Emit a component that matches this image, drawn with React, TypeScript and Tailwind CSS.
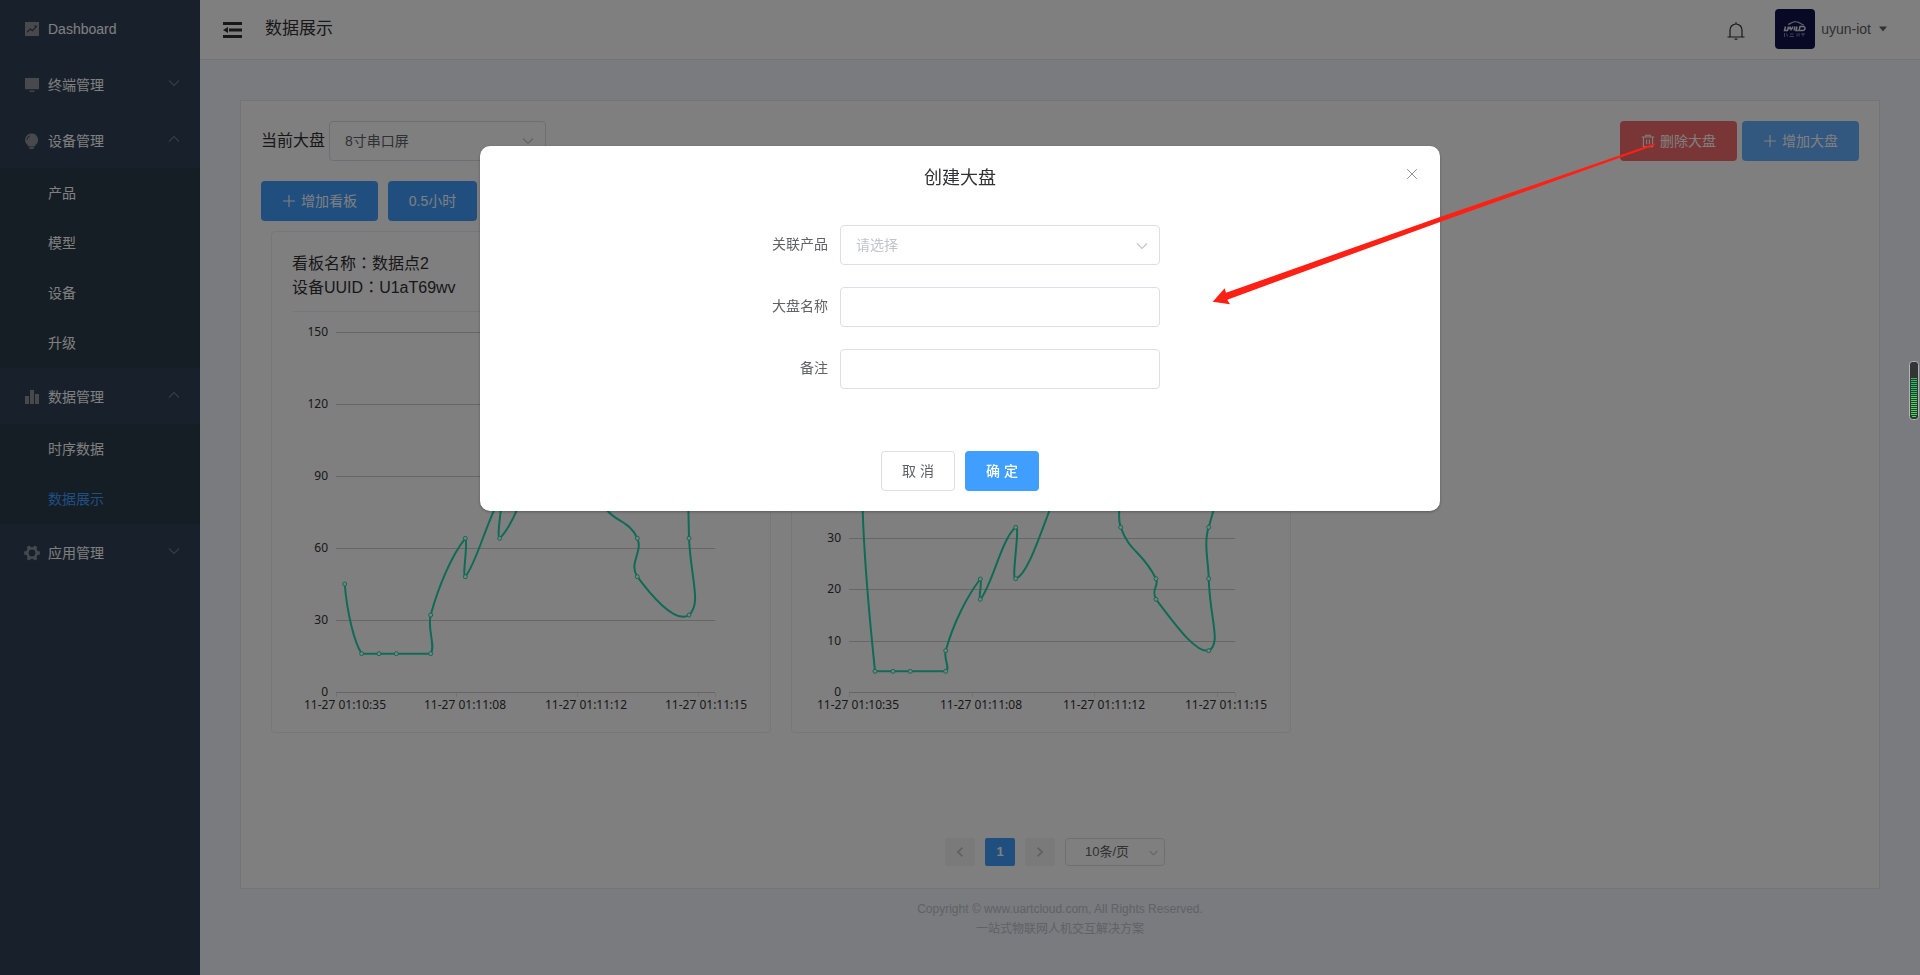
import type { ReactNode } from 'react';

const chevronDown = 'M1 1.5 L6 6.5 L11 1.5';
const chevronUp = 'M1 6.5 L6 1.5 L11 6.5';

function Chevron({ up = false, className = '' }: { up?: boolean; className?: string }) {
  return (
    <svg viewBox="0 0 12 8" className={`h-2 w-3 ${className}`} fill="none" stroke="currentColor" strokeWidth="1.1" aria-hidden="true">
      <path d={up ? chevronUp : chevronDown} />
    </svg>
  );
}

function PlusIcon() {
  return (
    <svg viewBox="0 0 14 14" className="h-3.5 w-3.5" stroke="currentColor" strokeWidth="1.1" aria-hidden="true">
      <path d="M7 1v12M1 7h12" />
    </svg>
  );
}

function TrashIcon() {
  return (
    <svg viewBox="0 0 14 14" className="h-3.5 w-3.5" fill="none" stroke="currentColor" strokeWidth="1.1" aria-hidden="true">
      <path d="M0.8 3h12.4M4.7 3V1.2h4.6V3M2.4 3v9.8h9.2V3M5.6 5.5v4.8M8.4 5.5v4.8" />
    </svg>
  );
}

const icons: Record<string, ReactNode> = {
  marketing: (
    <>
      <path fill="currentColor" d="M1 1h14v14H1z" />
      <path d="M3.2 11.2 6.2 8l2.2 1.6 4.2-4.2M10.4 5.2h2.4" fill="none" stroke="#304156" strokeWidth="1.2" />
    </>
  ),
  platform: <path fill="currentColor" d="M1 1h14v11.2H1zM6 13.4h4l1.2 1.4H4.8z" />,
  bulb: (
    <>
      <path fill="currentColor" d="M7.6 0.4a6.4 6.4 0 0 1 3.9 11.5l-.7 1.5H4.4l-.7-1.5A6.4 6.4 0 0 1 7.6.4zM4.9 14.2h5.4l-1 1.8H5.9z" />
      <path d="M3 6.6a4.6 4.6 0 0 1 3-3.8" fill="none" stroke="#304156" strokeWidth="1" />
    </>
  ),
  bars: <path fill="currentColor" d="M1 7h4v8H1zM6 1h4v14H6zM11 5h4v10h-4z" />,
  gear: (
    <g stroke="currentColor" fill="none">
      <circle cx="8" cy="8" r="4.7" strokeWidth="2.600" />
      <path d="M0.200 8h3M12.800 8h3M4.100 1.250l1.500 2.600M10.400 12.150l1.500 2.600M11.900 1.250l-1.500 2.600M5.600 12.150l-1.500 2.600" strokeWidth="3.400" />
    </g>
  ),
};

type Section = { label: string; icon: string; open?: boolean; children?: string[]; leaf?: boolean };

const sections: Section[] = [
  { label: 'Dashboard', icon: 'marketing', leaf: true },
  { label: '终端管理', icon: 'platform' },
  { label: '设备管理', icon: 'bulb', open: true, children: ['产品', '模型', '设备', '升级'] },
  { label: '数据管理', icon: 'bars', open: true, children: ['时序数据', '数据展示'] },
  { label: '应用管理', icon: 'gear' },
];

function Sidebar() {
  return (
    <nav className="w-[200px] shrink-0 bg-[#304156] text-sm text-white">
      <ul>
        {sections.map((s) => (
          <li key={s.label}>
            <a href="#" className="flex h-14 items-center pt-0.5 pr-5 pl-6">
              <svg viewBox="0 0 16 16" className="mr-2 h-4 w-4 text-[#909399]" aria-hidden="true">
                {icons[s.icon]}
              </svg>
              <span className="grow">{s.label}</span>
              {!s.leaf && <Chevron up={s.open} className="mb-1 text-[#6f7a87]" />}
            </a>
            {s.children && (
              <ul className="bg-[#2b3a4a]">
                {s.children.map((c) => (
                  <li key={c}>
                    <a href="#" className={`flex h-[50px] items-center pl-12 ${c === '数据展示' ? 'text-[#409eff]' : ''}`}>
                      {c}
                    </a>
                  </li>
                ))}
              </ul>
            )}
          </li>
        ))}
      </ul>
    </nav>
  );
}

function Header() {
  return (
    <header className="flex h-[60px] items-center border-b border-[#e6e6e6] bg-white pr-[33px] pb-0.5 pl-[22px]">
      <button type="button" aria-label="折叠菜单" className="pt-0.5 text-[#303133]">
        <svg viewBox="0 0 20 16" className="h-4 w-5" fill="currentColor" aria-hidden="true">
          <path d="M1 0h19v3H1zM7 6.500h13v3H7zM1 13h19v3H1zM1 8l5-3v6z" />
        </svg>
      </button>
      <h1 className="ml-[23px] grow text-[17px] text-[#303133]">数据展示</h1>
      <button type="button" aria-label="通知" className="mr-[30px] pt-1 text-[#303133]">
        <svg viewBox="0 0 18 18" className="h-[18px] w-[18px]" fill="none" stroke="currentColor" strokeWidth="1.200" aria-hidden="true">
          <path d="M0.500 15h17M3 15V8a6 6 0 0 1 12 0v7M9 2V.3M7.600 17.200h2.800" />
        </svg>
      </button>
      <button type="button" className="flex items-center text-sm text-[#606266]">
        <svg viewBox="0 0 40 40" className="mr-1.5 h-10 w-10 rounded" aria-hidden="true">
          <rect width="40" height="40" fill="#10144a" />
          <path d="M13 15.500c3-1 5-3.300 8-2.800 3 .3 5 2.600 8 3.600" fill="none" stroke="#b9bcd6" strokeWidth="1.200" />
          <path d="M10.500 17.500l-1 4h3l1-4M15.500 17.500l-.9 2h2.400l1-2M16.500 19.500l-.8 2M20 17.500l-1 4M22 17.500l-1 4h2M25 17.500l-1 4h3.500c3 0 3.500-4 .5-4z" fill="none" stroke="#e3e4ef" strokeWidth="1.500" />
          <path d="M9.500 24v4M11.500 24.500l1 3M15 25h3.500M14.500 27.500h4.500M22 24.500v3M24 24v3.500M26 25h4M28 24v3.500" fill="none" stroke="#7d81ab" strokeWidth="1" />
        </svg>
        uyun-iot
        <svg viewBox="0 0 8 6" className="ml-2 h-1.5 w-2" aria-hidden="true">
          <path d="M0 0.500h8L4 5.500z" fill="currentColor" />
        </svg>
      </button>
    </header>
  );
}

type ChartSpec = {
  name: string;
  uuid: string;
  left: number;
  yTicks: number[];
  xTicks: number[];
  xLabels: [number, string][];
  path: string;
  points: [number, number][];
};

const charts: ChartSpec[] = [
  {
    name: '数据点2',
    uuid: 'U1aT69wv',
    left: 44,
    yTicks: [0, 30, 60, 90, 120, 150],
    xTicks: [44.5, 164.5, 285.5, 406.5, 423.5],
    xLabels: [[53, '11-27 01:10:35'], [173, '11-27 01:11:08'], [294, '11-27 01:11:12'], [414, '11-27 01:11:15']],
    path: 'M52.7 272C55 300 62 330 69.7 341.7H138.7C144 334 135 318 138.7 303C146.3 274.7 159.7 243 173.3 226.3C176.3 231.3 170 264 173.3 264.7C183 253 191.300 221.300 203 196.300C210 184 209 190 208.700 199C207.300 211.300 205.300 225.300 207.700 226.300C214.700 219.700 220.700 208 226.300 194.700C250 120 290 130 313 194.700L315.700 199C324.700 209.700 338 209.700 345.300 226.300C351.300 239.700 336.300 251.300 345.300 264.700C356.300 279.700 383 313 397 303C409.700 291.300 399 268 397 226.300L396 180',
    points: [[52.7, 272], [69.7, 341.7], [87, 341.7], [104.3, 341.7], [138.7, 341.7], [138.7, 303], [173.3, 226.3], [173.3, 264.7], [207.7, 226.3], [345.3, 226.3], [345.3, 264.7], [397, 303], [397, 226.3]],
  },
  {
    name: '数据点1',
    uuid: 'U1aT69wv',
    left: 37,
    yTicks: [0, 10, 20, 30, 40, 50, 60, 70],
    xTicks: [37.5, 160.5, 282.5, 405.5, 423.5],
    xLabels: [[46, '11-27 01:10:35'], [169, '11-27 01:11:08'], [292, '11-27 01:11:12'], [414, '11-27 01:11:15']],
    path: 'M48 140L50.7 199C53 268 59.7 324.7 63 359.3H133.7C138.7 357.3 131.3 346.3 133.7 338.7C141.3 311.3 154.7 284.7 168.3 267C170.7 269.7 166 285.3 168.3 287.3C179.7 274.7 189.7 226.3 203.7 215.3C208.7 213 198.7 268 203.7 266.7C214.7 263 226.3 228 237.3 199C255 150 300 150 307.3 199C306.7 206.3 307.3 211.3 308.7 215.3C318 241.3 329.7 238 344 266.7C347.3 274.7 338.7 276.3 344 287.3C361.3 309.7 383 341.3 396.7 338.7C409.7 331.3 398 308 396.7 266.7C396.7 251.3 391.3 231.3 396.7 215.3L401.3 199',
    points: [[63, 359.3], [81, 359.3], [98.3, 359.3], [133.7, 359.3], [133.7, 338.7], [168.3, 267], [168.3, 287.3], [203.7, 215.3], [203.7, 266.7], [308.7, 215.3], [344, 266.7], [344, 287.3], [396.7, 338.7], [396.7, 266.7], [396.7, 215.3]],
  },
];

// The Traditional Chinese face centres the full-width colon in its cell.
function Colon() {
  return <span className="font-['Noto_Sans_CJK_TC',sans-serif] leading-none">：</span>;
}

function ChartCard({ chart }: { chart: ChartSpec }) {
  const step = 360 / (chart.yTicks.length - 1);
  return (
    <article className="w-[500px] rounded border border-[#ebeef5] px-5 pt-5 pb-5">
      <header className="border-b border-[#ebeef5] pb-[11px] text-base text-[#303133]">
        <p>看板名称<Colon />{chart.name}</p>
        <p>设备UUID<Colon />{chart.uuid}</p>
      </header>
      <svg viewBox="0 0 460 400" className="block h-[400px] w-[460px] font-['Noto_Sans',sans-serif] text-xs" role="img" aria-label={chart.name}>
        {chart.yTicks.map((t, i) => {
          const y = Math.round(380 - i * step) + 0.5;
          return (
            <g key={t}>
              <path d={`M${chart.left} ${y}H423`} stroke="#cccccc" />
              <text x={chart.left - 8} y={y + 3} textAnchor="end" fill="#333333">{t}</text>
            </g>
          );
        })}
        {chart.xTicks.map((x) => (
          <path key={x} d={`M${x} 381v4`} stroke="#e0e6f1" />
        ))}
        {chart.xLabels.map(([x, t]) => (
          <text key={t} x={x} y="397" textAnchor="middle" fill="#333333">{t}</text>
        ))}
        <path d={chart.path} fill="none" stroke="#1fd6ac" strokeWidth="2" strokeLinejoin="bevel" />
        {chart.points.map(([x, y]) => (
          <circle key={`${x}-${y}`} cx={x} cy={y} r="2" fill="#ffffff" stroke="#1fd6ac" strokeWidth="1" />
        ))}
      </svg>
    </article>
  );
}

const solidButton = 'flex h-10 items-center justify-center gap-[5px] rounded text-sm text-white';

function Board() {
  return (
    <section className="flex grow flex-col border border-[#e6e9f0] bg-white px-5 pt-5 pb-[22px]">
      <div className="flex items-center justify-between">
        <div className="flex items-center gap-1">
          <label htmlFor="board" className="text-base text-[#303133]">当前大盘</label>
          <div className="relative">
            <select id="board" className="h-10 w-[217px] appearance-none rounded border border-[#dcdfe6] bg-white px-[15px] text-sm text-[#606266]">
              <option>8寸串口屏</option>
            </select>
            <Chevron className="pointer-events-none absolute top-4 right-3 text-[#c0c4cc]" />
          </div>
        </div>
        <div className="flex gap-[5px]">
          <button type="button" className={`${solidButton} w-[117px] bg-[#f56c6c]`}><TrashIcon />删除大盘</button>
          <button type="button" className={`${solidButton} w-[117px] bg-[#66b1ff]`}><PlusIcon />增加大盘</button>
        </div>
      </div>
      <div className="mt-5 flex gap-2.5">
        <button type="button" className={`${solidButton} w-[117px] bg-[#409eff]`}><PlusIcon />增加看板</button>
        <button type="button" className={`${solidButton} w-[89px] bg-[#409eff]`}>0.5小时</button>
      </div>
      <div className="mt-2.5 flex flex-wrap gap-5 px-2.5">
        {charts.map((c) => <ChartCard key={c.name} chart={c} />)}
      </div>
      <div className="mt-auto flex justify-center gap-2.5 pr-2.5">
        <button type="button" aria-label="上一页" disabled className="flex h-7 w-[30px] items-center justify-center rounded-xs bg-[#f4f4f5] text-[#c0c4cc]">
          <svg viewBox="0 0 8 10" className="h-2.5 w-2" fill="none" stroke="currentColor" strokeWidth="1.800" aria-hidden="true"><path d="M6.500.7 1.800 5l4.700 4.300" /></svg>
        </button>
        <button type="button" className="h-7 w-[30px] rounded-xs bg-[#409eff] text-[13px] font-bold text-white">1</button>
        <button type="button" aria-label="下一页" disabled className="flex h-7 w-[30px] items-center justify-center rounded-xs bg-[#f4f4f5] text-[#c0c4cc]">
          <svg viewBox="0 0 8 10" className="h-2.5 w-2" fill="none" stroke="currentColor" strokeWidth="1.800" aria-hidden="true"><path d="M1.500.7 6.200 5 1.500 9.300" /></svg>
        </button>
        <div className="relative">
          <select aria-label="每页条数" className="h-7 w-[100px] appearance-none rounded border border-[#dcdfe6] bg-white pr-6 pl-[19px] text-[13px] text-[#606266]">
            <option>10条/页</option>
          </select>
          <svg viewBox="0 0 12 8" className="pointer-events-none absolute top-3 right-[7px] h-1.5 w-[9px] text-[#c0c4cc]" fill="none" stroke="currentColor" strokeWidth="1.400" aria-hidden="true">
            <path d={chevronDown} />
          </svg>
        </div>
      </div>
    </section>
  );
}

const field = 'h-10 w-80 rounded border border-[#dcdfe6] bg-white px-[15px] text-sm';
const fieldLabel = 'w-[120px] pr-3 text-right leading-[38px]';

function CreateDialog() {
  return (
    <div role="dialog" aria-modal="true" aria-labelledby="dialog-title" className="relative mx-auto mt-[15vh] w-1/2 rounded-[10px] bg-white py-5 shadow-[0_1px_3px_rgba(0,0,0,0.3)]">
      <h2 id="dialog-title" className="text-center text-lg leading-6 text-[#303133]">创建大盘</h2>
      <button type="button" aria-label="关闭" className="absolute top-5 right-5 p-0.5 text-[#909399]">
        <svg viewBox="0 0 12 12" className="h-3 w-3" stroke="currentColor" aria-hidden="true"><path d="M1.200 1.200l9.600 9.600M10.800 1.200l-9.600 9.600" /></svg>
      </button>
      <form>
        <div className="mt-[35px] ml-[25%] flex flex-col gap-[22px] text-sm text-[#606266]">
          <div className="flex">
            <label htmlFor="product" className={fieldLabel}>关联产品</label>
            <div className="relative">
              <select id="product" className={`${field} appearance-none text-[#c0c4cc]`}>
                <option>请选择</option>
              </select>
              <Chevron className="pointer-events-none absolute top-[17px] right-3 text-[#c0c4cc]" />
            </div>
          </div>
          <div className="flex">
            <label htmlFor="name" className={fieldLabel}>大盘名称</label>
            <input id="name" type="text" className={field} />
          </div>
          <div className="flex">
            <label htmlFor="remark" className={fieldLabel}>备注</label>
            <input id="remark" type="text" className={field} />
          </div>
        </div>
        <div className="mt-[62px] flex justify-center gap-2.5 text-sm">
          <button type="button" className="h-10 w-[74px] rounded border border-[#dcdfe6] text-[#606266]">取 消</button>
          <button type="button" className="h-10 w-[74px] rounded bg-[#409eff] font-medium text-white">确 定</button>
        </div>
      </form>
    </div>
  );
}

const meterBars = Array.from({ length: 20 }, (_, i) => 17 + i * 2);

export default function App() {
  return (
    <div className="font-['Liberation_Sans','Noto_Sans_CJK_SC',sans-serif]">
      <div className="flex min-h-screen">
        <Sidebar />
        <div className="flex min-w-0 grow flex-col bg-[#f4f6fc]">
          <Header />
          <main className="flex grow flex-col px-10 pt-10">
            <Board />
            <footer className="pt-2.5 pb-9 text-center text-xs leading-5 text-[#c0c4cc]">
              <p>Copyright © www.uartcloud.com, All Rights Reserved.</p>
              <p>一站式物联网人机交互解决方案</p>
            </footer>
          </main>
        </div>
      </div>
      <div className="fixed inset-0 bg-black/50">
        <CreateDialog />
        <svg viewBox="1212 143 444 162" className="pointer-events-none absolute top-[143px] left-[1212px] h-[162px] w-[444px]" aria-hidden="true">
          <path fill="#ff2015" d="M1212.700 301.700 1224.700 288.300 1226 292.700 1440 217 1654.300 143.500 1654.800 145.200 1440 221.900 1227.300 299.700 1230 304.300z" />
        </svg>
        <svg viewBox="0 0 10 60" className="absolute top-[361px] right-px h-[60px] w-2.5" aria-hidden="true">
          <rect x="0.500" y="0.500" width="9" height="58" rx="3" fill="#333436" stroke="#b4b4b4" />
          {meterBars.map((y) => (
            <rect key={y} x={y > 54 ? 3 : 2} y={y} width={y > 54 ? 4 : 6} height="1" fill={y < 34 ? '#15c95c' : '#3ee05a'} />
          ))}
        </svg>
      </div>
    </div>
  );
}
